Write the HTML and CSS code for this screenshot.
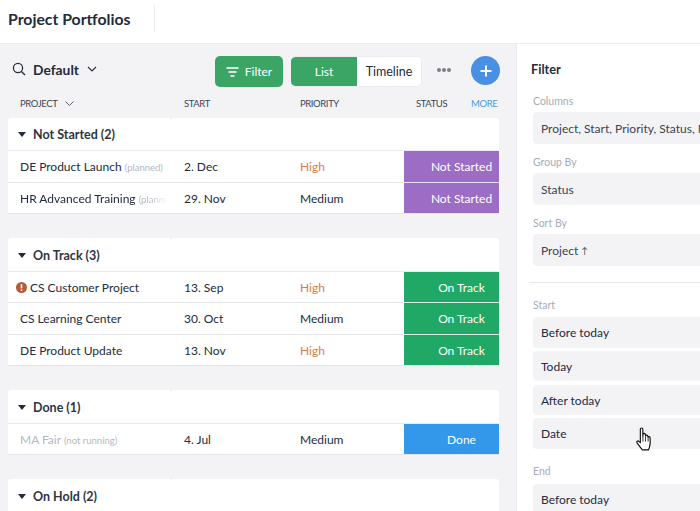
FILE: index.html
```html
<!DOCTYPE html>
<html lang="en">
<head>
<meta charset="utf-8">
<title>Project Portfolios</title>
<link rel="stylesheet" href="styles.css">
</head>
<body>
<header class="topbar">
  <h1 class="title">Project Portfolios</h1>
  <div class="topbar-sep"></div>
</header>
<div class="workspace">
  <main class="main">
    <div class="toolbar">
      <div class="view-select">
        <svg class="search" width="14" height="14" viewBox="0 0 14 14"><circle cx="6" cy="6" r="4.6" fill="none" stroke="#2a3040" stroke-width="1.3"/><path d="M9.4 9.4L13 13" stroke="#2a3040" stroke-width="1.4" fill="none"/></svg>
        <span class="view-name">Default</span>
        <svg class="chev" width="10" height="6" viewBox="0 0 10 6"><path d="M1 1l4 4 4-4" fill="none" stroke="#2a3040" stroke-width="1.2"/></svg>
      </div>
      <div class="spacer"></div>
      <button class="btn-filter"><svg width="13" height="10" viewBox="0 0 13 10"><path d="M0.5 1h12M2.5 5h8M4.5 9h4" stroke="#fff" stroke-width="1.4" fill="none"/></svg>Filter</button>
      <div class="switch"><span class="switch-on">List</span><span class="switch-off">Timeline</span></div>
      <div class="dots"><i></i><i></i><i></i></div>
      <button class="btn-add"><svg width="12" height="12" viewBox="0 0 12 12"><path d="M6 .5v11M.5 6h11" stroke="#fff" stroke-width="2" fill="none"/></svg></button>
    </div>
    <div class="cols">
      <span class="col col-project">PROJECT<svg width="9" height="5" viewBox="0 0 9 5"><path d="M.5.5l4 4 4-4" fill="none" stroke="#5a6070" stroke-width="1"/></svg></span>
      <span class="col col-start">START</span>
      <span class="col col-priority">PRIORITY</span>
      <span class="col col-status">STATUS</span>
      <span class="col col-more">MORE</span>
    </div>

    <section class="group">
      <div class="group-head head-short"><span class="tri"></span>Not Started (2)</div>
      <div class="row row-tall"><div class="c-project">DE Product Launch <small>(planned)</small></div><div class="c-start">2. Dec</div><div class="c-priority high">High</div><div class="c-status s-purple">Not Started</div></div>
      <div class="row"><div class="c-project fade">HR Advanced Training <small>(planned)</small></div><div class="c-start">29. Nov</div><div class="c-priority">Medium</div><div class="c-status s-purple">Not Started</div></div>
    </section>

    <section class="group">
      <div class="group-head"><span class="tri"></span>On Track (3)</div>
      <div class="row"><div class="c-project alert"><svg width="11" height="11" viewBox="0 0 11 11"><circle cx="5.5" cy="5.5" r="5.5" fill="#b8593a"/><path d="M5.5 2.300v4" stroke="#fff" stroke-width="1.600"/><path d="M5.5 7.400v1.500" stroke="#fff" stroke-width="1.600"/></svg>CS Customer Project</div><div class="c-start">13. Sep</div><div class="c-priority high">High</div><div class="c-status s-green">On Track</div></div>
      <div class="row row-tall"><div class="c-project">CS Learning Center</div><div class="c-start">30. Oct</div><div class="c-priority">Medium</div><div class="c-status s-green">On Track</div></div>
      <div class="row"><div class="c-project">DE Product Update</div><div class="c-start">13. Nov</div><div class="c-priority high">High</div><div class="c-status s-green">On Track</div></div>
    </section>

    <section class="group">
      <div class="group-head"><span class="tri"></span>Done (1)</div>
      <div class="row"><div class="c-project muted">MA Fair <small>(not running)</small></div><div class="c-start">4. Jul</div><div class="c-priority">Medium</div><div class="c-status s-blue">Done</div></div>
    </section>

    <section class="group">
      <div class="group-head"><span class="tri"></span>On Hold (2)</div>
    </section>
  </main>

  <aside class="panel">
    <h2 class="panel-title">Filter</h2>
    <div class="panel-body">
      <label class="lbl lbl-first">Columns</label>
      <div class="field tall">Project, Start, Priority, Status, More</div>
      <label class="lbl">Group By</label>
      <div class="field tall">Status</div>
      <label class="lbl">Sort By</label>
      <div class="field tall">Project <span class="arrow">↑</span></div>
    </div>
    <hr class="panel-sep">
    <div class="panel-body">
      <label class="lbl lbl-start">Start</label>
      <div class="stack">
        <div class="field">Before today</div>
        <div class="field">Today</div>
        <div class="field">After today</div>
        <div class="field">Date</div>
      </div>
      <label class="lbl lbl-end">End</label>
      <div class="field">Before today</div>
    </div>
    <svg class="cursor" width="19" height="26" viewBox="0 0 18 25"><path d="M5 2.200c0-1.600 2.400-1.600 2.400 0V9l.2-2c.2-1.300 2.200-1.200 2.300.2l.1 1.400c.2-1.200 2.100-1.100 2.200.3l.1 1c.3-1 2-.9 2.100.4.2 3 .2 5.800-.3 7.800-.4 1.800-.8 3-1.300 3.900H7c-1.500-1.700-3.500-4.300-5.200-6.700-.8-1.200.7-2.500 1.800-1.500L5 15.100z" fill="#fff" stroke="#111" stroke-width="1.100" stroke-linejoin="round"/><path d="M7.500 9v5M10 9v5M12.500 10v4" stroke="#111" stroke-width=".8" fill="none"/></svg>
  </aside>
</div>
</body>
</html>
```
FILE: styles.css
```css
* { box-sizing: border-box; }
html, body { margin: 0; height: 511px; overflow: hidden; }
body {
  font-family: Lato, "Noto Sans", sans-serif;
  font-size: 12px;
  color: #232b3e;
  background: #fff;
}
.topbar {
  height: 44px;
  display: flex;
  align-items: flex-start;
  border-bottom: 1px solid #ebebef;
  padding-left: 8px;
}
.title {
  margin: 9px 0 0;
  width: 146px;
  font-size: 15.800px;
  line-height: 20px;
  font-weight: 700;
}
.topbar-sep { width: 1px; height: 27px; margin-top: 5px; background: #ebebef; }
.workspace { display: flex; height: 467px; }
.main {
  width: 517px;
  flex: none;
  background: #f3f3f6;
  border-right: 1px solid #ebebef;
  padding: 12px 17px 0 8px;
  overflow: hidden;
}
.toolbar { display: flex; align-items: center; height: 31px; }
.view-select { display: flex; align-items: center; padding-left: 4px; margin-top: -5px; }
.search { margin-right: 7px; }
.view-name { font-size: 13.800px; font-weight: 700; margin-right: 8px; }
.spacer { flex: 1; }
.btn-filter {
  width: 68px; height: 31px;
  display: flex; align-items: center; justify-content: center; gap: 6px;
  background: #3ba566; color: #fff; border: 0; border-radius: 5px;
  font: inherit;
}
.switch {
  display: flex; height: 31px; margin-left: 8px;
  background: #fff; border-radius: 5px; overflow: hidden;
  border: 1px solid #ebebef; border-left: 0;
}
.switch-on { width: 66px; margin: -1px 0; background: #3ba566; color: #fff; display: flex; align-items: center; justify-content: center; }
.switch-off { width: 64px; display: flex; align-items: center; justify-content: center; font-size: 12.500px; }
.dots { display: flex; gap: 1px; width: 14px; margin-left: 15px; margin-right: 20px; margin-top: -4px; }
.dots i { width: 4px; height: 4px; border-radius: 50%; background: #7a7e8a; }
.btn-add {
  width: 29px; height: 29px; margin-top: -2px; margin-right: -1px;
  display: flex; align-items: center; justify-content: center;
  border-radius: 50%; border: 0; background: #4a90e2; padding: 0;
}
.cols { display: flex; height: 31px; padding-top: 1px; align-items: center; font-size: 9.500px; letter-spacing: -.4px; color: #3c4354; }
.col { flex: none; }
.col-project { width: 176px; padding-left: 12px; display: flex; align-items: center; gap: 8px; }
.col-start { width: 116px; }
.col-priority { width: 116px; }
.col-status { width: 55px; }
.col-more { color: #4b9ad8; }
.group { background: #fff; margin-bottom: 24px; border-radius: 3px 3px 0 0; position: relative; }
.group::before {
  content: ""; position: absolute; left: 161px; top: -1px;
  border-left: 2px solid transparent; border-right: 2px solid transparent; border-top: 3px solid #f3f3f6;
}
.group-head {
  height: 34px; padding-top: 2px; display: flex; align-items: center; gap: 7px;
  padding-left: 10px; font-size: 12.500px; font-weight: 700; color: #2e3444;
  border-bottom: 1px solid #e9e9ee;
}
.head-short { height: 33px; padding-top: 0; }
.tri { width: 0; height: 0; border-left: 4px solid transparent; border-right: 4px solid transparent; border-top: 5px solid #232b3e; }
.row { display: flex; height: 31px; align-items: center; border-bottom: 1px solid #e4e4e9; }
.row-tall { height: 32px; }
.c-project { width: 160px; margin-right: 16px; flex: none; padding-left: 12px; white-space: nowrap; overflow: hidden; }
.c-project small { font-size: 9.500px; color: #b4b7c0; }
.fade { -webkit-mask-image: linear-gradient(to right, #000 88%, transparent); mask-image: linear-gradient(to right, #000 88%, transparent); }
.alert { padding-left: 8px; display: flex; align-items: center; gap: 3px; }
.muted { color: #b4b7c0; }
.c-start { width: 116px; flex: none; }
.c-priority { width: 104px; flex: none; }
.high { color: #d97c43; }
.c-status { flex: 1; align-self: stretch; display: flex; align-items: center; justify-content: center; padding-left: 20px; color: #fff; }
.s-purple { background: #9c6dc4; }
.s-green { background: #1fa866; }
.s-blue { background: #3498ea; }
.panel { flex: 1; min-width: 0; position: relative; overflow: hidden; }
.panel-title { margin: 16px 0 0 14px; font-size: 12.700px; line-height: 18px; font-weight: 700; }
.panel-body { padding-left: 16px; }
.lbl { display: block; font-size: 10.500px; line-height: 14px; color: #a8abb5; padding-top: 11px; padding-bottom: 4px; white-space: nowrap; }
.lbl-first { padding-top: 16px; }
.lbl-start { padding-top: 15px; padding-bottom: 5px; }
.lbl-end { padding-top: 15px; padding-bottom: 6px; }
.field {
  width: 240px; height: 31px; padding-left: 8px;
  display: flex; align-items: center; gap: 3px;
  background: #f3f3f6; border-radius: 4px; white-space: nowrap; overflow: hidden;
}
.tall { height: 32px; color: #3c4354; }
.arrow { font-size: 9px; }
.panel-sep { margin: 16px 0 0 12px; border: 0; border-top: 1px solid #e6e6eb; width: 240px; }
.stack { display: flex; flex-direction: column; gap: 3px; }
.stack .field:nth-child(2), .stack .field:nth-child(3) { height: 30px; }
.stack .field:nth-child(3) { margin-top: 1px; }
.cursor { position: absolute; left: 118px; top: 383px; }
```
